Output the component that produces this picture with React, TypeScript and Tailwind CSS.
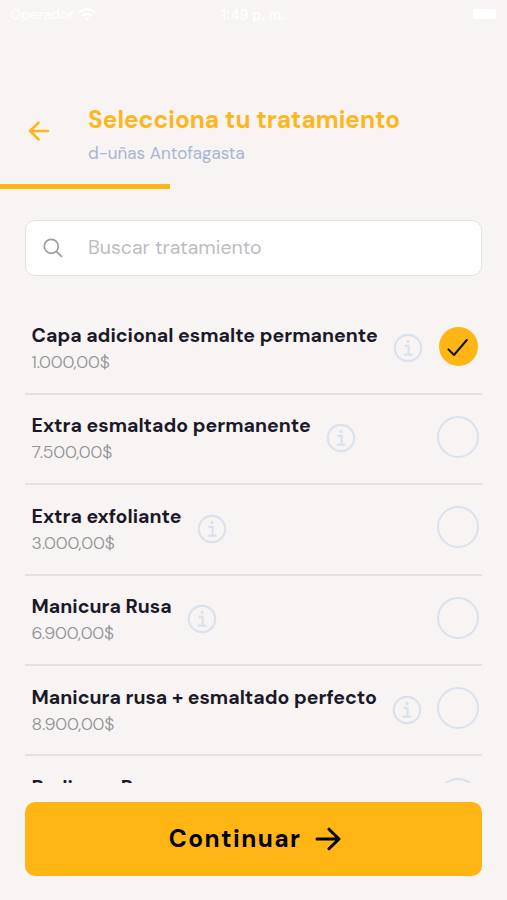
type Treatment = {
  name: string;
  price: string;
  selected?: boolean;
};

const treatments: Treatment[] = [
  { name: "Capa adicional esmalte permanente", price: "1.000,00$", selected: true },
  { name: "Extra esmaltado permanente", price: "7.500,00$" },
  { name: "Extra exfoliante", price: "3.000,00$" },
  { name: "Manicura Rusa", price: "6.900,00$" },
  { name: "Manicura rusa + esmaltado perfecto", price: "8.900,00$" },
  { name: "Pedicura Rusa", price: "9.900,00$" },
];

const StatusBar = () => (
  <div className="grid h-[28px] shrink-0 grid-cols-3 items-center pl-[10px] pr-[11px] text-[14px] text-white">
    <div className="flex items-center gap-1">
      <span className="tracking-[0.2px]">Operador</span>
      <svg className="h-[15px] w-[18px]" viewBox="0 0 18 15" fill="none" stroke="currentColor" strokeWidth="2.4">
        <path d="M1 5.5a11.5 11.5 0 0 1 16 0M4 9a7.2 7.2 0 0 1 10 0" />
        <path d="M9 14l-2.5-2.7a3.6 3.6 0 0 1 5 0z" fill="currentColor" stroke="none" />
      </svg>
    </div>
    <span className="text-center font-['Inter',sans-serif] font-medium">1:49 p. m.</span>
    <div className="flex justify-end">
      <div className="h-[10px] w-[23px] rounded-[2px] bg-white" />
    </div>
  </div>
);

const InfoIcon = () => (
  <svg className="mb-[1px] h-[30px] w-[30px] shrink-0" viewBox="0 0 30 30" fill="none" stroke="#dae2ee" strokeWidth="2.2">
    <circle cx="15" cy="15" r="13.2" />
    <path d="M11.6 12.8h4v8.8M10.8 21.7h8.6" />
    <circle cx="15" cy="8.4" r="1.6" fill="#dae2ee" stroke="none" />
  </svg>
);

const SelectMark = ({ selected }: { selected?: boolean }) => {
  if (!selected) {
    return <div className="mb-[4px] h-[42px] w-[42px] shrink-0 rounded-full border-[2.5px] border-[#dae2ee]" />;
  }
  return (
    <div className="mb-[4px] mr-[1.5px] flex h-[39px] w-[39px] shrink-0 items-center justify-center rounded-full bg-[#ffb615]">
      <svg className="h-[20px] w-[24px]" viewBox="0 0 24 20" fill="none" stroke="#111111" strokeWidth="2" strokeLinecap="round" strokeLinejoin="round">
        <path d="M2.4 12.4l5.6 5.6L20.8 3" />
      </svg>
    </div>
  );
};

const TreatmentRow = ({ item }: { item: Treatment }) => (
  <div className="flex h-[90.4px] shrink-0 items-center justify-between border-b-2 border-[#e4e1e1] pl-[6.6px] pr-[3px]">
    <div className="flex items-center gap-[15.5px]">
      <div className="whitespace-nowrap pt-[1px]">
        <div className="text-[19.5px] font-bold leading-[26px] text-[#1b1929]">{item.name}</div>
        <div className="text-[17.5px] font-light leading-[26px] tracking-[-0.2px] text-[#929196]">{item.price}</div>
      </div>
      <InfoIcon />
    </div>
    <SelectMark selected={item.selected} />
  </div>
);

export default function App() {
  return (
    <div className="flex h-[900px] w-[507px] flex-col overflow-hidden bg-[#f7f4f3] font-['DM_Sans','Inter',sans-serif]">
      <StatusBar />

      <header className="mt-[75px] flex h-[81px] shrink-0 items-start pl-[28px]">
        <svg className="mt-[18px] h-[20px] w-[22px]" viewBox="0 0 22 20" fill="none" stroke="#ffb61e" strokeWidth="2.6" strokeLinecap="round" strokeLinejoin="round">
          <path d="M20 10H2M10.5 1.7L2 10l8.5 8.3" />
        </svg>
        <div className="ml-[38px] whitespace-nowrap">
          <h1 className="text-[24.4px] font-bold leading-[34px] text-[#ffb61e]">Selecciona tu tratamiento</h1>
          <p className="text-[17px] leading-[32px] text-[#a9b5cf]">d-uñas Antofagasta</p>
        </div>
      </header>
      <div className="h-[5px] w-[170px] shrink-0 bg-[#ffb615]" />

      <div className="mx-[25px] mt-[31px] flex h-[56px] shrink-0 items-center rounded-[10px] border border-[#e3e1e1] bg-white pl-[16.5px]">
        <svg className="h-[20px] w-[20px]" viewBox="0 0 20 20" fill="none" stroke="#9c9c9e" strokeWidth="1.7" strokeLinecap="round">
          <circle cx="8.3" cy="8.3" r="7" />
          <path d="M13.4 13.4l5 5" />
        </svg>
        <span className="ml-[25.5px] text-[19.5px] text-[#bdbcc1]">Buscar tratamiento</span>
      </div>

      <div className="mx-[25px] mt-[28.4px] flex h-[478.6px] shrink-0 flex-col overflow-hidden">
        {treatments.map((item) => (
          <TreatmentRow key={item.name} item={item} />
        ))}
      </div>

      <button className="mx-[25px] mt-[19px] flex h-[74px] shrink-0 items-center justify-center gap-[14px] rounded-[10px] bg-[#ffb615] pl-[3px] text-black">
        <span className="text-[24.5px] font-bold tracking-[1.4px]">Continuar</span>
        <svg className="h-[24px] w-[26px]" viewBox="0 0 26 24" fill="none" stroke="currentColor" strokeWidth="3" strokeLinecap="round" strokeLinejoin="round">
          <path d="M2 12h22M14 2.2L24 12l-10 9.8" />
        </svg>
      </button>
    </div>
  );
}
